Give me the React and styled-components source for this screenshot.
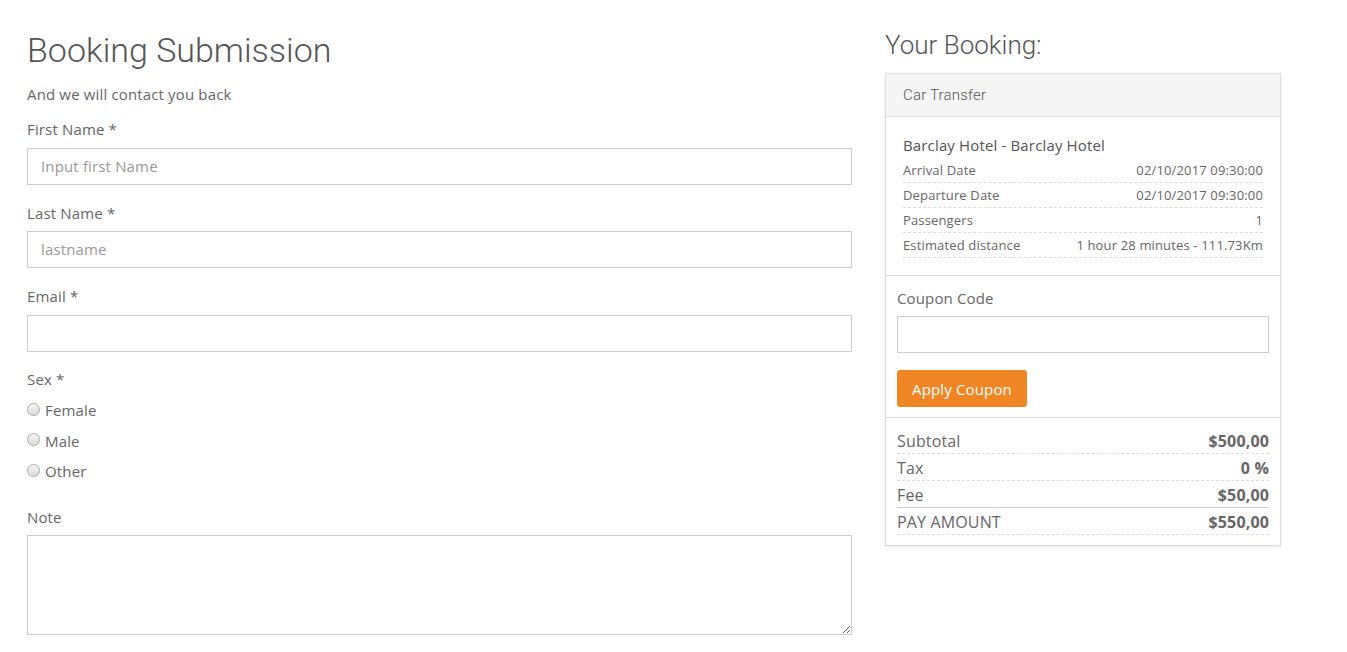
import styled, { createGlobalStyle } from "styled-components";

const GlobalStyle = createGlobalStyle`
  body {
    margin: 0;
    background: #fff;
    font-family: "Open Sans", "Liberation Sans", sans-serif;
    letter-spacing: 0.15px;
    color: #666;
  }
  * { box-sizing: border-box; }
`;

const Page = styled.div`
  display: flex;
  align-items: flex-start;
  gap: 33px;
  padding: 0 0 0 27px;
`;

const FormColumn = styled.div`
  width: 825px;
  padding-top: 30px;
`;

const Title = styled.h1`
  margin: 0;
  font-family: Roboto, "Liberation Sans", sans-serif;
  font-weight: 300;
  font-size: 34px;
  line-height: 40px;
  letter-spacing: 0;
  color: #555;
`;

const Subtitle = styled.p`
  margin: 13px 0 0;
  font-size: 15px;
  line-height: 22px;
`;

const Group = styled.div`
  margin-top: ${(p) => p.top ?? 16}px;
`;

const Label = styled.label`
  display: block;
  font-size: 15px;
  line-height: 22px;
  margin-bottom: ${(p) => p.gap ?? 8}px;
  color: #666;
`;

const Input = styled.input`
  display: block;
  width: 100%;
  height: 37px;
  border: 1px solid #ccc;
  border-radius: 0;
  padding: 0 13px 1px;
  font-family: "Open Sans", "Liberation Sans", sans-serif;
  font-size: 15px;
  letter-spacing: 0.15px;
  color: #555;
  outline: none;
  &::placeholder {
    color: #999;
  }
`;

const TextArea = styled.textarea`
  display: block;
  width: 100%;
  height: 100px;
  border: 1px solid #ccc;
  padding: 8px 13px;
  font-family: "Open Sans", "Liberation Sans", sans-serif;
  font-size: 15px;
  outline: none;
`;

const RadioRow = styled.label`
  display: flex;
  align-items: center;
  height: 30.5px;
  font-size: 15px;
  color: #666;
`;

const RadioDot = styled.span`
  width: 13px;
  height: 13px;
  border-radius: 50%;
  border: 1px solid #a9a9a9;
  background: linear-gradient(#f4f4f4, #dcdcdc);
  margin-right: 5px;
  margin-top: -2px;
`;

const SideColumn = styled.div`
  width: 396px;
  padding-top: 29px;
`;

const SideTitle = styled.h2`
  margin: 0;
  font-family: Roboto, "Liberation Sans", sans-serif;
  font-weight: 300;
  font-size: 26px;
  line-height: 32px;
  letter-spacing: 0;
  color: #555;
`;

const Panel = styled.div`
  margin-top: 12px;
  border: 1px solid #ddd;
  box-shadow: 0 1px 3px rgba(0, 0, 0, 0.1);
  background: #fff;
`;

const PanelHeader = styled.div`
  height: 43px;
  display: flex;
  align-items: center;
  padding: 0 17px;
  background: #f5f5f5;
  border-bottom: 1px solid #ddd;
  font-family: Roboto, "Liberation Sans", sans-serif;
  font-weight: 300;
  font-size: 15px;
  letter-spacing: 0.2px;
  color: #555;
`;

const Section = styled.div`
  padding: ${(p) => p.pad};
  border-bottom: ${(p) => (p.last ? "none" : "1px solid #ddd")};
`;

const TripName = styled.div`
  font-size: 15px;
  line-height: 22px;
  color: #555;
  margin-bottom: 2px;
`;

const DetailRow = styled.div`
  display: flex;
  justify-content: space-between;
  align-items: center;
  height: 25px;
  border-bottom: 1px dashed #ddd;
  font-size: 13px;
  color: #666;
`;

const CouponButton = styled.button`
  margin-top: 17px;
  width: 130px;
  height: 37px;
  border: none;
  border-radius: 3px;
  background: #ef8523;
  color: #fff;
  font-family: "Open Sans", "Liberation Sans", sans-serif;
  font-size: 15px;
  letter-spacing: 0.15px;
  cursor: pointer;
`;

const TotalRow = styled.div`
  display: flex;
  justify-content: space-between;
  align-items: center;
  height: 27px;
  padding-top: 1px;
  border-bottom: 1px ${(p) => (p.solid ? "solid #ccc" : "dashed #ddd")};
  font-size: 16px;
  color: #666;
  & b {
    font-weight: 700;
  }
`;

const details = [
  ["Arrival Date", "02/10/2017 09:30:00"],
  ["Departure Date", "02/10/2017 09:30:00"],
  ["Passengers", "1"],
  ["Estimated distance", "1 hour 28 minutes - 111.73Km"],
];

const totals = [
  ["Subtotal", "$500,00"],
  ["Tax", "0 %"],
  ["Fee", "$50,00", true],
  ["PAY AMOUNT", "$550,00"],
];

export default function App() {
  return (
    <>
      <GlobalStyle />
      <Page>
        <FormColumn>
          <Title>Booking Submission</Title>
          <Subtitle>And we will contact you back</Subtitle>
          <Group top={13}>
            <Label>First Name *</Label>
            <Input placeholder="Input first Name" />
          </Group>
          <Group top={17}>
            <Label gap={7}>Last Name *</Label>
            <Input placeholder="lastname" />
          </Group>
          <Group top={17}>
            <Label>Email *</Label>
            <Input />
          </Group>
          <Group>
            <Label gap={5}>Sex *</Label>
            {["Female", "Male", "Other"].map((s) => (
              <RadioRow key={s}>
                <RadioDot />
                {s}
              </RadioRow>
            ))}
          </Group>
          <Group top={19}>
            <Label gap={7}>Note</Label>
            <TextArea />
          </Group>
        </FormColumn>
        <SideColumn>
          <SideTitle>Your Booking:</SideTitle>
          <Panel>
            <PanelHeader>Car Transfer</PanelHeader>
            <Section pad="17px 17px 17px">
              <TripName>Barclay Hotel - Barclay Hotel</TripName>
              {details.map(([k, v]) => (
                <DetailRow key={k}>
                  <span>{k}</span>
                  <span>{v}</span>
                </DetailRow>
              ))}
            </Section>
            <Section pad="11px 11px 10px">
              <Label gap={7}>Coupon Code</Label>
              <Input />
              <CouponButton>Apply Coupon</CouponButton>
            </Section>
            <Section pad="9px 11px 10px" last>
              {totals.map(([k, v, solid]) => (
                <TotalRow key={k} solid={solid}>
                  <span>{k}</span>
                  <b>{v}</b>
                </TotalRow>
              ))}
            </Section>
          </Panel>
        </SideColumn>
      </Page>
    </>
  );
}
